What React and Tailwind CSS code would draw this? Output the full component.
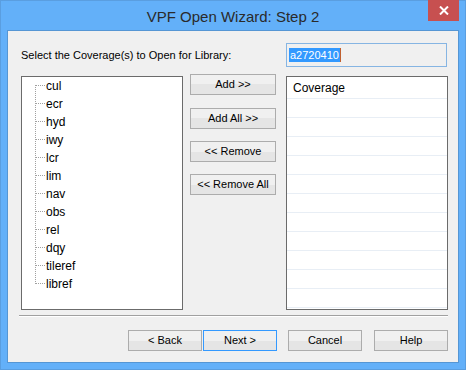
import React from "react";

const items = ["cul", "ecr", "hyd", "iwy", "lcr", "lim", "nav", "obs", "rel", "dqy", "tileref", "libref"];

function Connector({ first, last }) {
  return (
    <svg width="10" height="18" className="shrink-0" shapeRendering="crispEdges">
      <line x1="0.5" y1={first ? 8 : 0} x2="0.5" y2={last ? 9 : 18} stroke="#a0a0a0" strokeDasharray="1 1" />
      <line x1="1" y1="8.5" x2="10" y2="8.5" stroke="#a0a0a0" strokeDasharray="1 1" />
    </svg>
  );
}

function Btn({ children, className = "", focused = false }) {
  return (
    <div
      className={`flex items-center justify-center h-[21px] border ${focused ? "border-[#3399ff]" : "border-[#acacac]"} bg-[linear-gradient(to_bottom,#f0f0f0_0%,#f0f0f0_50%,#e5e5e5_50%,#e5e5e5_100%)] text-[11px] text-black leading-none ${className}`}
      style={{ fontFamily: '"Liberation Sans", Arial, sans-serif' }}
    >
      {children}
    </div>
  );
}

export default function App() {
  return (
    <div
      className="w-[466px] h-[370px] bg-[#63b0f9] border border-[#5a9ee0] flex flex-col relative"
      style={{ fontFamily: '"Liberation Sans", Arial, sans-serif' }}
    >
      {/* Title bar */}
      <div className="h-[29px] flex items-center justify-center">
        <span className="text-[15px] text-[#2a2a2a] pt-[3px]">VPF Open Wizard: Step 2</span>
      </div>
      <div className="absolute right-[6px] top-[-1px] w-[31px] h-[21px] bg-[#c75050] flex items-center justify-center">
        <svg width="10" height="9" viewBox="0 0 10 9">
          <path d="M1 0.5 L9 8.5 M9 0.5 L1 8.5" stroke="#fff" strokeWidth="2" />
        </svg>
      </div>

      {/* Client area */}
      <div className="ml-[6px] w-[452px] h-[333px] border border-[#5596d4] bg-[#f0f0f0] flex flex-col">
        {/* Row 1 */}
        <div className="mt-[12px] flex items-center h-[24px] pl-[13px]">
          <span className="text-[11px] text-black w-[265px]">Select the Coverage(s) to Open for Library:</span>
          <div className="w-[161px] h-[24px] border border-[#86b5e3] bg-[#f0f0f0] flex items-center pl-[2px]">
            <span className="bg-[#3399ff] text-white text-[11px] leading-[14px] h-[14px] px-[1px]">a2720410</span>
            <span className="w-[1px] h-[14px] bg-[#c06030]" />
          </div>
        </div>

        {/* Row 2 */}
        <div className="mt-[9px] flex pl-[13px]">
          <div className="w-[162px] h-[234px] border border-[#6b6b6b] bg-white flex flex-col">
            {items.map((it, i) => (
              <div key={it} className="h-[18px] flex items-center pl-[13px]">
                <Connector first={i === 0} last={i === items.length - 1} />
                <span className="ml-[1px] text-[12px] text-black leading-none">{it}</span>
              </div>
            ))}
          </div>

          <div className="ml-[7px] w-[86px] flex flex-col mt-[-2px]">
            <Btn>Add &gt;&gt;</Btn>
            <Btn className="mt-[13px]">Add All &gt;&gt;</Btn>
            <Btn className="mt-[12px]">&lt;&lt; Remove</Btn>
            <Btn className="mt-[12px]">&lt;&lt; Remove All</Btn>
          </div>

          <div className="ml-[10px] w-[162px] h-[234px] border border-[#6b6b6b] bg-white flex flex-col overflow-hidden">
            <div className="h-[22px] shrink-0 flex items-center pl-[6px] border-b border-[#e8eef5]">
              <span className="text-[12px] text-black">Coverage</span>
            </div>
            {Array.from({ length: 11 }).map((_, i) => (
              <div key={i} className="h-[19px] shrink-0 border-b border-[#e8eef5]" />
            ))}
          </div>
        </div>

        {/* Separator */}
        <div className="mt-[5px] ml-[11px] w-[429px] h-[2px] border-t border-[#a0a0a0] border-b border-b-white" />

        {/* Bottom buttons */}
        <div className="mt-[13px] flex pl-[120px]">
          <Btn className="w-[74px]">&lt; Back</Btn>
          <Btn className="w-[74px] ml-[1px]" focused>Next &gt;</Btn>
          <Btn className="w-[74px] ml-[11px]">Cancel</Btn>
          <Btn className="w-[74px] ml-[12px]">Help</Btn>
        </div>
      </div>
    </div>
  );
}
